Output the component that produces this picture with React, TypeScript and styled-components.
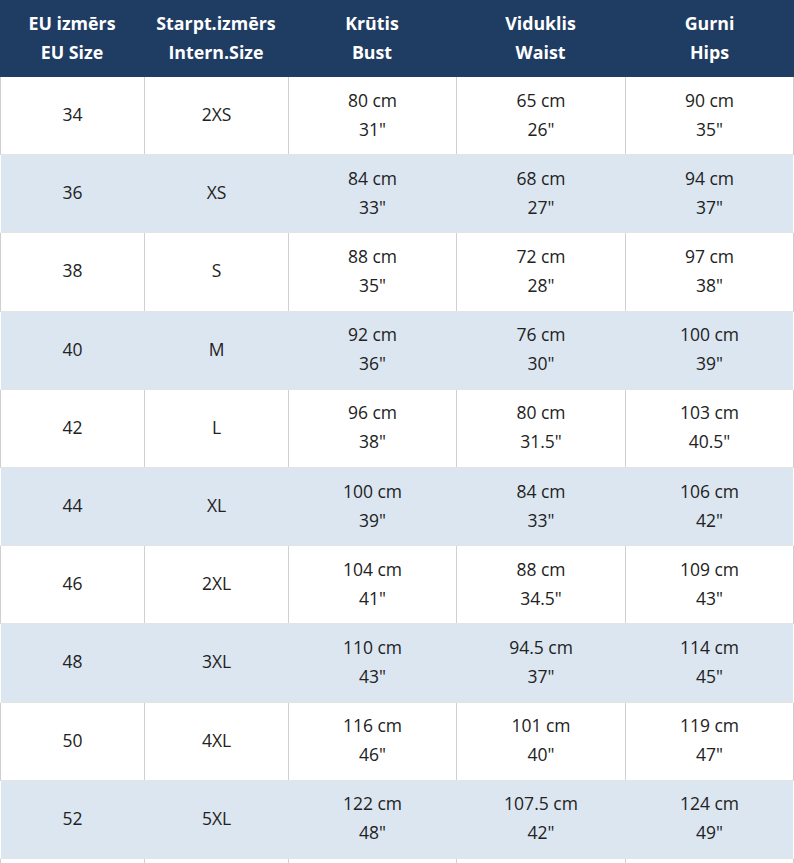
import React, { ReactElement } from 'react';
import styled, { createGlobalStyle } from 'styled-components';

interface SizeRow {
  eu: string;
  intern: string;
  bust: [string, string];
  waist: [string, string];
  hips: [string, string];
}

const rows: SizeRow[] = [
  { eu: '34', intern: '2XS', bust: ['80 cm', '31"'], waist: ['65 cm', '26"'], hips: ['90 cm', '35"'] },
  { eu: '36', intern: 'XS', bust: ['84 cm', '33"'], waist: ['68 cm', '27"'], hips: ['94 cm', '37"'] },
  { eu: '38', intern: 'S', bust: ['88 cm', '35"'], waist: ['72 cm', '28"'], hips: ['97 cm', '38"'] },
  { eu: '40', intern: 'M', bust: ['92 cm', '36"'], waist: ['76 cm', '30"'], hips: ['100 cm', '39"'] },
  { eu: '42', intern: 'L', bust: ['96 cm', '38"'], waist: ['80 cm', '31.5"'], hips: ['103 cm', '40.5"'] },
  { eu: '44', intern: 'XL', bust: ['100 cm', '39"'], waist: ['84 cm', '33"'], hips: ['106 cm', '42"'] },
  { eu: '46', intern: '2XL', bust: ['104 cm', '41"'], waist: ['88 cm', '34.5"'], hips: ['109 cm', '43"'] },
  { eu: '48', intern: '3XL', bust: ['110 cm', '43"'], waist: ['94.5 cm', '37"'], hips: ['114 cm', '45"'] },
  { eu: '50', intern: '4XL', bust: ['116 cm', '46"'], waist: ['101 cm', '40"'], hips: ['119 cm', '47"'] },
  { eu: '52', intern: '5XL', bust: ['122 cm', '48"'], waist: ['107.5 cm', '42"'], hips: ['124 cm', '49"'] },
];

const headers: [string, string][] = [
  ['EU izmērs', 'EU Size'],
  ['Starpt.izmērs', 'Intern.Size'],
  ['Krūtis', 'Bust'],
  ['Viduklis', 'Waist'],
  ['Gurni', 'Hips'],
];

export default function App(): ReactElement {
  return (
    <>
      <GlobalStyle />
      <Table>
        <HeaderRow>
          {headers.map(([lv, en]) => (
            <HeaderCell key={en}>
              <span>{lv}</span>
              <span>{en}</span>
            </HeaderCell>
          ))}
        </HeaderRow>
        {rows.map((row, i) => (
          <Row key={row.eu} $shaded={i % 2 === 1}>
            <Cell>{row.eu}</Cell>
            <Cell>{row.intern}</Cell>
            <Cell>
              <span>{row.bust[0]}</span>
              <span>{row.bust[1]}</span>
            </Cell>
            <Cell>
              <span>{row.waist[0]}</span>
              <span>{row.waist[1]}</span>
            </Cell>
            <Cell>
              <span>{row.hips[0]}</span>
              <span>{row.hips[1]}</span>
            </Cell>
          </Row>
        ))}
        <Row $shaded={false}>
          <Cell />
          <Cell />
          <Cell />
          <Cell />
          <Cell />
        </Row>
      </Table>
    </>
  );
}

const GlobalStyle = createGlobalStyle`
  html, body {
    margin: 0;
    padding: 0;
    background: #ffffff;
    overflow: hidden;
  }
  body {
    font-family: 'Open Sans', 'Noto Sans', sans-serif;
  }
`;

const Table = styled.div`
  width: 794px;
  display: flex;
  flex-direction: column;
`;

const columns = '143px 144px 168px 169px 1fr';

const HeaderRow = styled.div`
  display: grid;
  grid-template-columns: 144px 144px 168px 169px 1fr;
  height: 77px;
  background: #1f3c62;
`;

const HeaderCell = styled.div`
  display: flex;
  flex-direction: column;
  align-items: center;
  justify-content: center;
  color: #ffffff;
  font-weight: 700;
  font-size: 17.8px;
  line-height: 29px;
  padding-bottom: 2px;
`;

const Row = styled.div<{ $shaded: boolean }>`
  display: grid;
  grid-template-columns: ${columns};
  height: 78.2px;
  box-sizing: border-box;
  background: ${(p) => (p.$shaded ? '#dce6f1' : '#ffffff')};
  border-left: 1px solid ${(p) => (p.$shaded ? '#ffffff' : '#cfcfcf')};
  border-right: 1.5px solid ${(p) => (p.$shaded ? '#ffffff' : '#cfcfcf')};
  border-bottom: 1px solid #e4e4e4;

  & > div + div {
    border-left: 1.5px solid ${(p) => (p.$shaded ? 'transparent' : '#d0d0d0')};
  }
`;

const Cell = styled.div`
  display: flex;
  flex-direction: column;
  align-items: center;
  justify-content: center;
  color: #222222;
  font-size: 17.5px;
  line-height: 29px;
  padding-bottom: 2px;
`;
